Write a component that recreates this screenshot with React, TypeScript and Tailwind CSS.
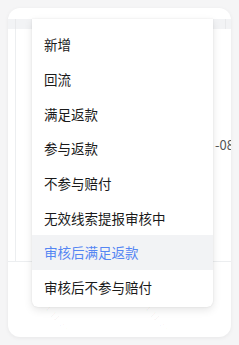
const options = [
  '新增',
  '回流',
  '满足返款',
  '参与返款',
  '不参与赔付',
  '无效线索提报审核中',
  '审核后满足返款',
  '审核后不参与赔付',
];

const ACTIVE = '审核后满足返款';

// faint watermark stamps below the menu
const marks = [
  { left: 20, top: 298 },
  { left: 120, top: 298 },
];

export default function App() {
  return (
    <div
      className="w-[239px] h-[345px] bg-[#f5f5f6] p-2"
      style={{ fontFamily: '"Noto Sans CJK SC", "Noto Sans", sans-serif' }}
    >
      <div className="relative h-full overflow-hidden rounded-xl bg-white shadow-[0_1px_4px_rgba(0,0,0,0.06)]">
        {/* table behind the dropdown */}
        <div className="flex flex-col pt-[11px]">
          <div className="flex h-[10px] bg-[#f2f3f5]">
            <div className="w-2 border-r border-[#e8e9eb]" />
            <div className="flex-1" />
            <div className="w-[6px] border-l border-[#e8e9eb]" />
          </div>
          <div className="flex h-[233px] border-b border-[#eceef0]">
            <div className="w-2 border-r border-[#eceef0]" />
            <div className="flex flex-1 items-center justify-end">
              <span className="mr-[-3px] text-[13px] text-[#555]">-08</span>
            </div>
          </div>
        </div>

        <div className="pointer-events-none absolute inset-0">
          {marks.map((m, i) => (
            <span
              key={i}
              className="absolute rotate-45 whitespace-nowrap text-[9px] text-[#000]/[0.04]"
              style={{ left: m.left, top: m.top }}
            >
              2024/11/28
            </span>
          ))}
        </div>

        {/* dropdown */}
        <div className="absolute left-6 top-[11px] w-[181px] rounded-b-md bg-white pt-2 pb-[2px] shadow-[0_3px_8px_rgba(0,0,0,0.1),0_0_2px_rgba(0,0,0,0.1)]">
          {options.map((o) => (
            <div
              key={o}
              className={
                'flex h-[34.7px] items-center px-3 text-[13.5px] ' +
                (o === ACTIVE ? 'bg-[#f2f3f5] text-[#5586f3]' : 'text-[#1a1a1a]')
              }
            >
              {o}
            </div>
          ))}
        </div>
      </div>
    </div>
  );
}
